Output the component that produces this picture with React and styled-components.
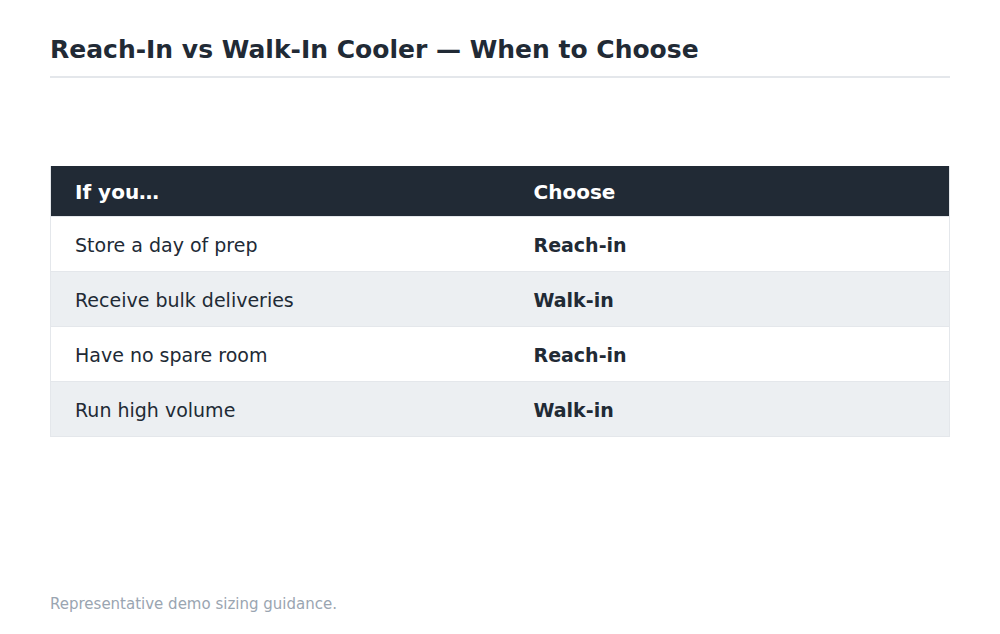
import React from 'react';
import styled, { createGlobalStyle } from 'styled-components';

const rows = [
  { when: 'Store a day of prep', pick: 'Reach-in' },
  { when: 'Receive bulk deliveries', pick: 'Walk-in' },
  { when: 'Have no spare room', pick: 'Reach-in' },
  { when: 'Run high volume', pick: 'Walk-in' },
];

const App = () => {
  return (
    <Page>
      <GlobalStyle />
      <Title>Reach-In vs Walk-In Cooler — When to Choose</Title>
      <Table>
        <colgroup>
          <col style={{ width: 459 }} />
          <col />
        </colgroup>
        <thead>
          <tr>
            <Th>If you…</Th>
            <Th>Choose</Th>
          </tr>
        </thead>
        <tbody>
          {rows.map((r, i) => (
            <Row key={r.when} $alt={i % 2 === 1}>
              <Td>{r.when}</Td>
              <Td $bold>{r.pick}</Td>
            </Row>
          ))}
        </tbody>
      </Table>
      <Footnote>Representative demo sizing guidance.</Footnote>
    </Page>
  );
};

const GlobalStyle = createGlobalStyle`
  html, body {
    margin: 0;
    padding: 0;
    background: #ffffff;
  }
  body {
    font-family: "DejaVu Sans", "Liberation Sans", sans-serif;
    color: #212a35;
  }
`;

const Page = styled.div`
  display: flex;
  flex-direction: column;
  box-sizing: border-box;
  min-height: 634px;
  padding: 33px 50px 21px;
`;

const Title = styled.h1`
  margin: 0;
  padding-bottom: 9px;
  border-bottom: 2px solid #e4e7eb;
  font-size: 25px;
  line-height: 34px;
  font-weight: 700;
  color: #212a35;
`;

const Table = styled.table`
  margin-top: 88px;
  width: 100%;
  border-collapse: collapse;
  table-layout: fixed;
  border: 1px solid #e4e7eb;
  border-top: none;
`;

const Th = styled.th`
  height: 50px;
  padding: 2px 24px 0;
  box-sizing: border-box;
  text-align: left;
  background: #212a35;
  color: #ffffff;
  font-size: 20px;
  font-weight: 700;
`;

const Row = styled.tr`
  background: ${(p) => (p.$alt ? '#eceff2' : '#ffffff')};
  border-top: 1px solid #e4e7eb;
`;

const Td = styled.td`
  height: 55px;
  padding: 2px 24px 0;
  box-sizing: border-box;
  font-size: 19px;
  font-weight: ${(p) => (p.$bold ? 700 : 400)};
  color: #212a35;
`;

const Footnote = styled.div`
  margin-top: auto;
  font-size: 15px;
  line-height: 18px;
  color: #9aa5b1;
`;

export default App;
